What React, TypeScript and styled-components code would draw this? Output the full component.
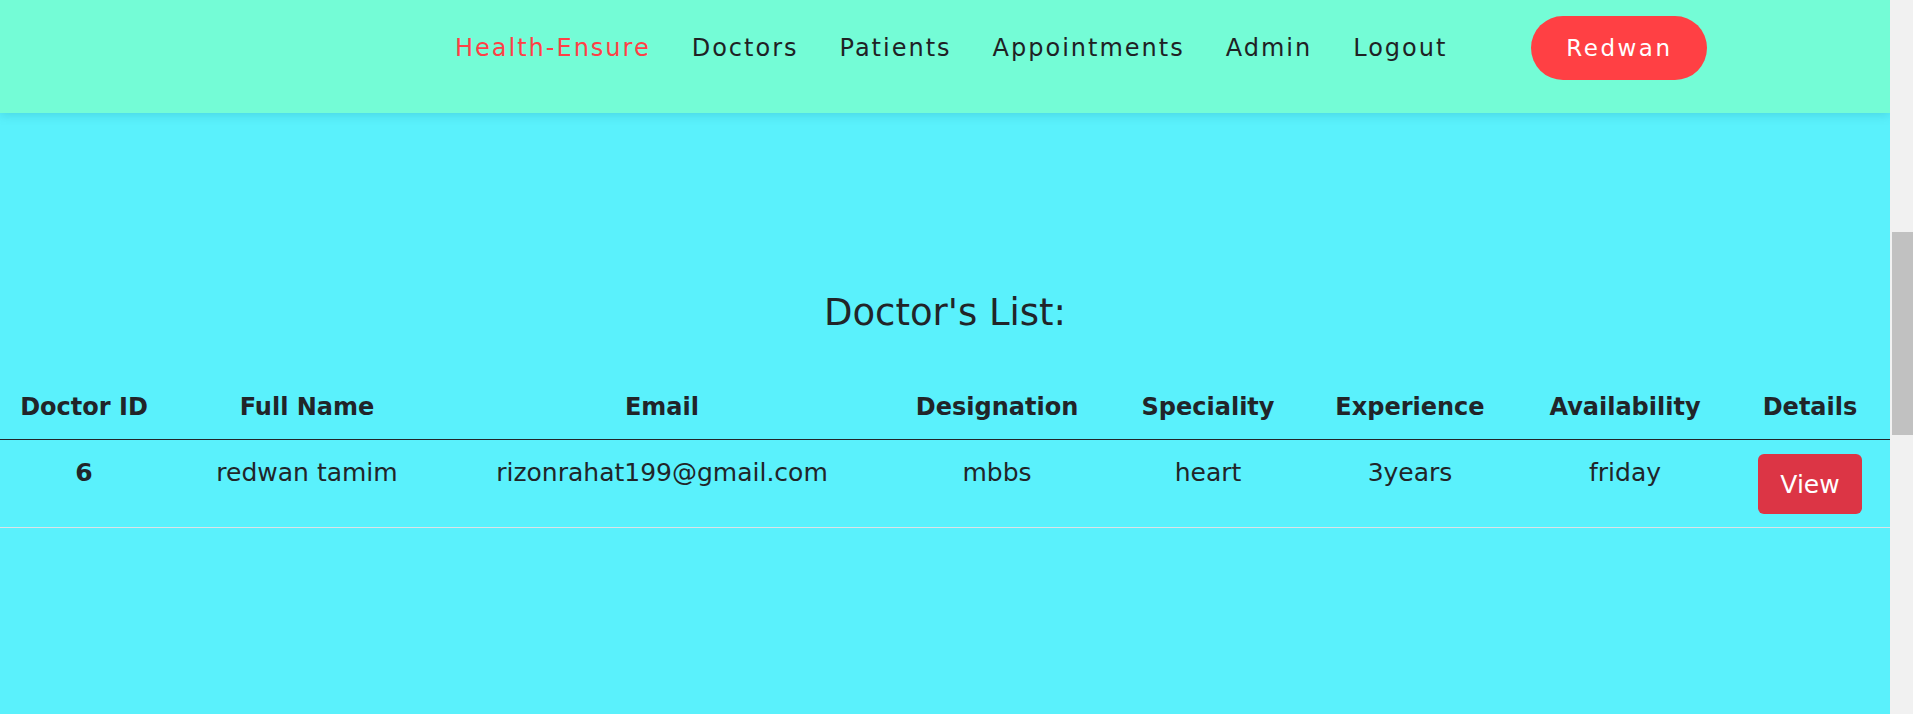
import React from 'react';
import styled, { createGlobalStyle } from 'styled-components';

const GlobalStyle = createGlobalStyle`
  html, body {
    margin: 0;
    padding: 0;
    overflow: hidden;
    background: #f1f1f1;
  }
  * {
    box-sizing: border-box;
  }
`;

const Frame = styled.div`
  display: flex;
  height: 100vh;
  font-family: 'DejaVu Sans', Inter, sans-serif;
  color: #212529;
`;

const Viewport = styled.div`
  flex: 1;
  min-width: 0;
  background: #5af1fc;
  overflow: hidden;
`;

const ScrollTrack = styled.aside`
  width: 23px;
  flex-shrink: 0;
  background: #f1f1f1;
  padding: 232px 0 0 2px;
`;

const ScrollThumb = styled.div`
  height: 203px;
  background: #c1c1c1;
`;

const NavBar = styled.header`
  position: relative;
  z-index: 2;
  height: 113px;
  background: #74fcd6;
  box-shadow: 0 2px 10px rgba(0, 90, 110, 0.18);
  display: flex;
  align-items: center;
  padding: 0 0 18px 455px;
`;

const NavLinks = styled.nav`
  display: flex;
  align-items: center;
  gap: 41px;
`;

const NavLink = styled.a<{ $brand?: boolean }>`
  font-size: 24px;
  letter-spacing: 2px;
  color: ${(p) => (p.$brand ? '#ff4046' : '#1f2124')};
  text-decoration: none;
  cursor: pointer;
`;

const UserButton = styled.button`
  margin-left: 84px;
  height: 64px;
  width: 176px;
  border: none;
  border-radius: 32px;
  background: #ff4044;
  color: #fff;
  font-family: inherit;
  font-size: 23px;
  letter-spacing: 2.5px;
  cursor: pointer;
`;

const Section = styled.main`
  padding-top: 176px;
`;

const Title = styled.h1`
  margin: 0 0 42px;
  text-align: center;
  font-size: 37px;
  font-weight: 400;
  line-height: 48px;
`;

const Table = styled.table`
  width: 1890px;
  table-layout: fixed;
  border-collapse: collapse;
`;

const HeadCell = styled.th`
  padding: 10px 10px 13px;
  font-size: 24px;
  line-height: 37px;
  font-weight: 700;
  text-align: center;
  border-bottom: 1px solid #212529;
`;

const Cell = styled.td<{ $bold?: boolean }>`
  padding: 14px 10px 13px;
  font-size: 25px;
  line-height: 37px;
  text-align: center;
  vertical-align: top;
  font-weight: ${(p) => (p.$bold ? 700 : 400)};
  border-bottom: 1px solid #dee2e6;
`;

const ViewButton = styled.button`
  display: inline-block;
  vertical-align: top;
  width: 104px;
  height: 60px;
  border: none;
  border-radius: 6px;
  background: #dc3545;
  color: #fff;
  font-family: inherit;
  font-size: 25px;
  cursor: pointer;
`;

const columns = [
  { label: 'Doctor ID', width: 168 },
  { label: 'Full Name', width: 278 },
  { label: 'Email', width: 432 },
  { label: 'Designation', width: 238 },
  { label: 'Speciality', width: 184 },
  { label: 'Experience', width: 220 },
  { label: 'Availability', width: 210 },
  { label: 'Details', width: 160 },
];

const doctors = [
  {
    id: 6,
    name: 'redwan tamim',
    email: 'rizonrahat199@gmail.com',
    designation: 'mbbs',
    speciality: 'heart',
    experience: '3years',
    availability: 'friday',
  },
];

export default function App() {
  return (
    <Frame>
      <GlobalStyle />
      <Viewport>
        <NavBar>
          <NavLinks>
            <NavLink $brand>Health-Ensure</NavLink>
            <NavLink>Doctors</NavLink>
            <NavLink>Patients</NavLink>
            <NavLink>Appointments</NavLink>
            <NavLink>Admin</NavLink>
            <NavLink>Logout</NavLink>
          </NavLinks>
          <UserButton>Redwan</UserButton>
        </NavBar>
        <Section>
          <Title>Doctor's List:</Title>
          <Table>
            <colgroup>
              {columns.map((c) => (
                <col key={c.label} style={{ width: c.width }} />
              ))}
            </colgroup>
            <thead>
              <tr>
                {columns.map((c) => (
                  <HeadCell key={c.label}>{c.label}</HeadCell>
                ))}
              </tr>
            </thead>
            <tbody>
              {doctors.map((d) => (
                <tr key={d.id}>
                  <Cell $bold>{d.id}</Cell>
                  <Cell>{d.name}</Cell>
                  <Cell>{d.email}</Cell>
                  <Cell>{d.designation}</Cell>
                  <Cell>{d.speciality}</Cell>
                  <Cell>{d.experience}</Cell>
                  <Cell>{d.availability}</Cell>
                  <Cell>
                    <ViewButton>View</ViewButton>
                  </Cell>
                </tr>
              ))}
            </tbody>
          </Table>
        </Section>
      </Viewport>
      <ScrollTrack>
        <ScrollThumb />
      </ScrollTrack>
    </Frame>
  );
}
